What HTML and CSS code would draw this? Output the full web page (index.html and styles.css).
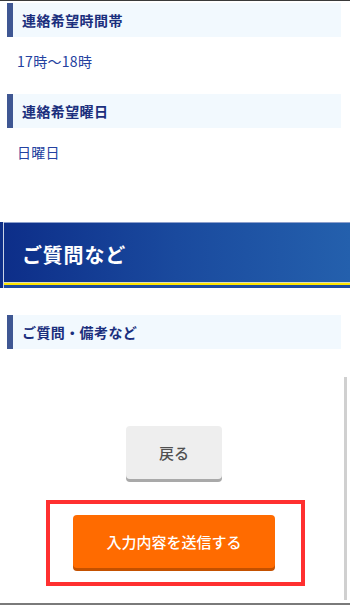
FILE: index.html
```html
<!DOCTYPE html>
<html lang="ja">
<head>
<meta charset="utf-8">
<link rel="stylesheet" href="styles.css">
</head>
<body>
<div class="page">
  <div class="topline"></div>
  <div class="field first">
    <h3 class="field-head">連絡希望時間帯</h3>
    <p class="field-value">17時〜18時</p>
  </div>
  <div class="field">
    <h3 class="field-head">連絡希望曜日</h3>
    <p class="field-value">日曜日</p>
  </div>
  <div class="banner">
    <div class="banner-edge"></div>
    <div class="banner-main">
      <h2 class="banner-title">ご質問など</h2>
      <div class="banner-stripe"></div>
    </div>
  </div>
  <div class="field third">
    <h3 class="field-head">ご質問・備考など</h3>
  </div>
  <div class="actions">
    <button class="btn-back" type="button">戻る</button>
    <div class="highlight">
      <button class="btn-submit" type="button">入力内容を送信する</button>
    </div>
  </div>
  <div class="bottomline"></div>
  <div class="scrollbar"></div>
</div>
</body>
</html>
```

FILE: styles.css
```css
html, body {
  margin: 0;
  padding: 0;
  background: #ffffff;
}
body {
  font-family: "Noto Sans CJK JP", "Noto Sans", sans-serif;
  width: 350px;
  height: 605px;
  overflow: hidden;
}
.page {
  position: relative;
  width: 350px;
  height: 605px;
}
.topline {
  height: 1px;
  background: #3a3a3a;
}
.field {
  margin: 0 9px 0 7px;
}
.field.first {
  margin-top: 2px;
}
.field-head {
  margin: 0;
  height: 34px;
  line-height: 34px;
  border-left: 6px solid #3f5793;
  background: #f2f9fe;
  padding-left: 9px;
  font-size: 14px;
  font-weight: 700;
  color: #1b2f7d;
  letter-spacing: 0.4px;
}
.field-value {
  margin: 0;
  padding: 14px 0 23px 10px;
  line-height: 20px;
  font-size: 14px;
  color: #2442a0;
  letter-spacing: 0.3px;
}
.banner {
  margin-top: 37px;
  display: flex;
  height: 66px;
  background: #0e2f88;
}
.banner-edge {
  width: 3px;
  border-right: 1px solid #c9d3e6;
  background: #0e2f88;
}
.banner-main {
  flex: 1;
  display: flex;
  flex-direction: column;
  border-top: 1px solid #8c9fcc;
  background: linear-gradient(90deg, #0d2e89 0%, #1a4a9e 50%, #2460ad 100%);
}
.banner-title {
  margin: 0;
  height: 59px;
  line-height: 64px;
  padding-left: 18px;
  font-size: 20px;
  font-weight: 700;
  color: #ffffff;
  letter-spacing: 0.8px;
}
.banner-stripe {
  height: 2px;
  border-top: 1px solid #d6dcc0;
  background: #ffe600;
  border-bottom: 3px solid #1d4b9f;
}
.field.third {
  margin-top: 27px;
}
.actions {
  display: flex;
  flex-direction: column;
  align-items: flex-start;
  margin-top: 77px;
}
.btn-back {
  margin-left: 126px;
  width: 96px;
  height: 53px;
  border: none;
  border-radius: 4px;
  background: #eeeeee;
  box-shadow: 0 3px 0 #a9a9a9;
  font-family: "Noto Sans CJK JP", "Noto Sans", sans-serif;
  font-size: 15px;
  font-weight: 500;
  color: #505050;
  padding: 0;
}
.highlight {
  margin-top: 21px;
  margin-left: 46px;
  width: 228px;
  height: 67px;
  border: 4px solid #ff3030;
  padding: 11px 0 0 23px;
  box-sizing: content-box;
}
.btn-submit {
  display: block;
  width: 202px;
  height: 53px;
  border: none;
  border-radius: 4px;
  background: #ff6b00;
  box-shadow: 0 3px 0 #c45100;
  font-family: "Noto Sans CJK JP", "Noto Sans", sans-serif;
  font-size: 15px;
  font-weight: 500;
  color: #ffffff;
  padding: 0;
}
.bottomline {
  margin-top: 17px;
  height: 2px;
  background: #7a7a7a;
}
.scrollbar {
  position: absolute;
  left: 344px;
  top: 377px;
  width: 3px;
  height: 223px;
  background: #d0d0d0;
}
```
